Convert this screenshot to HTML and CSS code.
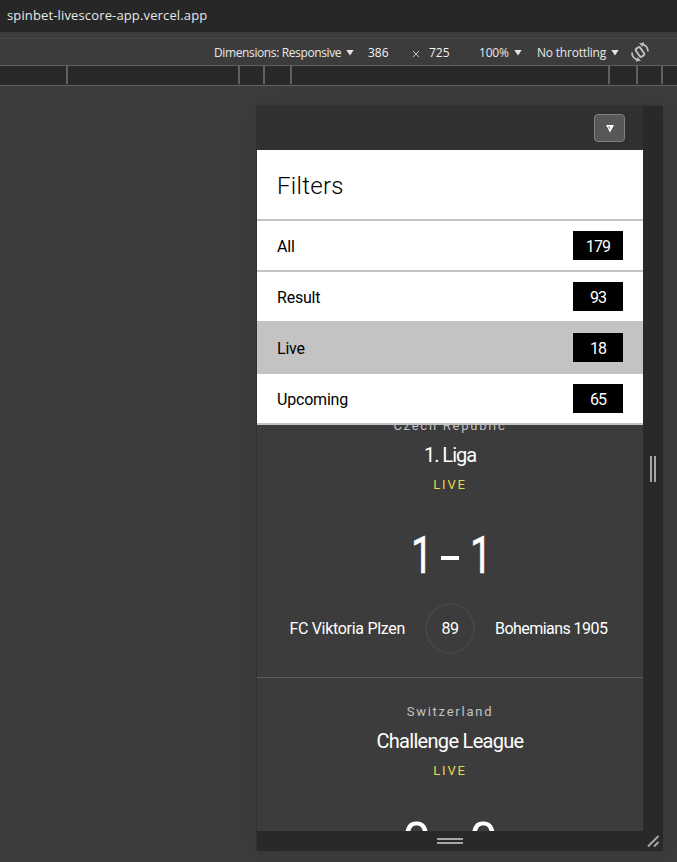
FILE: index.html
```html
<!DOCTYPE html>
<html lang="en">
<head>
<meta charset="utf-8">
<title>spinbet-livescore-app.vercel.app</title>
<link rel="stylesheet" href="styles.css">
</head>
<body>
<header class="address"><span class="url">spinbet-livescore-app.vercel.app</span></header>
<div class="toolbar">
  <span class="dims">Dimensions: Responsive</span><i class="caret"></i>
  <span class="num width">386</span>
  <svg class="times" viewBox="0 0 8 8"><path d="M1 1l6 6M7 1L1 7"/></svg>
  <span class="num height">725</span>
  <span class="zoom">100%</span><i class="caret"></i>
  <span class="throttle">No throttling</span><i class="caret"></i>
  <svg class="rotate" viewBox="0 0 20 20"><rect x="7.4" y="5.2" width="5.2" height="9.6" rx="1.6" transform="rotate(-35 10 10)" /><path d="M11 2.2C15.3 2.4 18 5.4 18 9.6M9 17.8C4.7 17.6 2 14.6 2 10.4"/><path class="tip" d="M9 1.6l5.2-1.4-1.4 4.6zM11 18.4l-5.2 1.4 1.4-4.6z"/></svg>
</div>
<div class="ruler"><i></i><i></i><i></i><i></i><i></i><i></i><i></i></div>
<main class="device">
  <section class="screen">
    <div class="topbar"><button class="menu" aria-label="Filters"><svg viewBox="0 0 8 8"><path class="solid" d="M0 0h8L4 7.5z"/><path class="cut" d="M2.2 1.5l1.6 3V1.5z"/></svg></button></div>
    <h1 class="title">Filters</h1>
    <ul class="filters">
      <li><span>All</span><b>179</b></li>
      <li><span>Result</span><b>93</b></li>
      <li class="active"><span>Live</span><b>18</b></li>
      <li><span>Upcoming</span><b>65</b></li>
    </ul>
    <div class="matches">
      <article class="match">
        <div class="country">Czech Republic</div>
        <h2 class="league short">1. Liga</h2>
        <div class="status">LIVE</div>
        <div class="score ones"><span>1</span><i></i><span>1</span></div>
        <div class="teams"><span class="home">FC Viktoria Plzen</span><span class="minute">89</span><span class="away">Bohemians 1905</span></div>
      </article>
      <article class="match">
        <div class="country">Switzerland</div>
        <h2 class="league">Challenge League</h2>
        <div class="status">LIVE</div>
        <div class="score"><span>0</span><i></i><span>0</span></div>
      </article>
    </div>
  </section>
  <div class="grip-right"><i></i><i></i></div>
  <div class="grip-bottom"><i></i><i></i></div>
  <svg class="grip-corner" viewBox="0 0 20 20"><path d="M5 15.5L15.5 5M11 15.5l4.5-4.5"/></svg>
</main>
</body>
</html>
```
FILE: styles.css
```css
* { box-sizing: border-box; }
body {
  margin: 0; width: 677px; height: 862px; overflow: hidden;
  background: #3c3c3c; color: #e8e8e8;
  font-family: "Open Sans", sans-serif; white-space: nowrap;
}
h1, h2, ul { margin: 0; padding: 0; font-weight: 400; }
.address { height: 32px; padding-left: 7px; background: #272727; font-size: 13px; line-height: 31px; }
.url { letter-spacing: .14px; }
.toolbar {
  height: 34px; padding: 7px 0 0 214px;
  display: flex; align-items: center;
  border-bottom: 1px solid #606163; font-size: 12px;
  background: linear-gradient(#484848, #484848) 0 6px / 100% 1px no-repeat;
}
.toolbar span { flex: none; padding-top: 1px; }
.dims { width: 132px; letter-spacing: -0.38px; }
.caret { flex: none; width: 8px; height: 6px; margin-top: 1px; background: #e4e4e4; clip-path: polygon(0 0, 100% 0, 50% 100%); }
.num { color: #f2f2f2; }
.width { width: 44px; margin-left: 14px; }
.times { width: 8px; height: 8px; margin-top: 4px; stroke: #bdbdbd; fill: none; flex: none; }
.height { width: 50px; margin-left: 9px; }
.zoom { width: 35px; letter-spacing: -0.2px; }
.throttle { width: 74px; margin-left: 15px; letter-spacing: -0.2px; }
.rotate { width: 20px; height: 20px; margin: -1px 0 0 11px; fill: none; stroke: #bdbdbd; stroke-width: 1.9; flex: none; }
.rotate .tip { fill: #bdbdbd; stroke: none; }
.ruler { height: 20px; background: #28292b; border-bottom: 1px solid #606163; display: flex; padding-left: 66px; }
.ruler i { width: 2px; height: 18px; background: #606163; margin-right: 170px; }
.ruler i:nth-child(2) { margin-right: 23px; }
.ruler i:nth-child(3) { margin-right: 25px; }
.ruler i:nth-child(4) { margin-right: 316px; }
.ruler i:nth-child(5) { margin-right: 26px; }
.ruler i:nth-child(6) { margin-right: 23px; }
.ruler i:nth-child(7) { margin-right: 0; }
.device {
  margin: 20px 0 0 257px; width: 406px; height: 745px;
  display: grid; grid-template: 725px 20px / 386px 20px;
  background: #28292b; box-shadow: -1px -1px 0 #323232, 0 0 20px rgba(0, 0, 0, .09);
}
.screen {
  height: 725px; overflow: hidden; background: #3c3c3c;
  display: flex; flex-direction: column; font-family: Roboto, sans-serif;
}
.topbar { flex: 0 0 44px; background: #303030; display: flex; justify-content: flex-end; padding: 8px 18px; }
.menu { width: 31px; height: 28px; padding: 1px 0 0; border: 1px solid #818181; border-radius: 4px; background: #575757; display: grid; place-items: center; }
.menu svg { width: 8px; height: 8px; }
.solid { fill: #fff; }
.cut { fill: #4a6672; }
.title { flex: 0 0 71px; padding: 4px 0 0 20px; line-height: 65px; background: #fff; color: #000; border-bottom: 2px solid #c3c3c3; font-size: 24px; font-weight: 300; letter-spacing: .3px; }
.filters { list-style: none; flex: 0 0 204px; background: #fff; color: #000; font-size: 16px; }
.filters li { height: 51px; padding: 0 20px; border-bottom: 2px solid #c3c3c3; display: flex; align-items: center; justify-content: space-between; }
.filters .active { background: #c3c3c3; }
.filters b { width: 50px; height: 29px; background: #000; color: #fff; font-weight: 400; line-height: 31px; text-align: center; letter-spacing: -.9px; }
.filters span { padding-top: 2px; letter-spacing: -.2px; }
.matches { flex: 1; min-height: 0; overflow: hidden; }
.match { height: 286px; padding-top: 22px; border-bottom: 1px solid #5c5c5c; text-align: center; color: #fff; }
.match:first-child { margin-top: -33px; }
.country { height: 23px; line-height: 23px; font-size: 13px; letter-spacing: 1.75px; color: #c3c3c3; }
.league { height: 37px; line-height: 37px; font-size: 20px; letter-spacing: -.7px; }
.short { letter-spacing: -1px; }
.status { height: 21px; line-height: 21px; font-size: 13px; letter-spacing: 1.8px; color: #e6d94c; }
.score { height: 76px; margin-top: 23px; display: flex; align-items: center; justify-content: center; gap: 10px; font-size: 51px; line-height: 76px; }
.score i { width: 18px; height: 4px; background: #fff; margin-top: 4px; }
.ones span { -webkit-text-stroke: .5px #fff; transform: translateX(5.5px) scaleX(.76); }
.ones span:last-child { transform: translateX(-2.5px) scaleX(.76); }
.teams { height: 50px; margin-top: 9px; display: grid; grid-template-columns: 1fr 50px 1fr; gap: 20px; font-size: 16px; line-height: 51px; }
.home { text-align: right; letter-spacing: -.3px; }
.away { text-align: left; letter-spacing: -.55px; }
.minute { border: 2px solid #454545; border-radius: 50%; line-height: 47px; letter-spacing: -.6px; }
.grip-right { display: flex; align-items: center; justify-content: center; gap: 2px; }
.grip-right i { width: 2px; height: 26px; background: #a5a6a7; }
.grip-bottom { display: flex; flex-direction: column; align-items: center; justify-content: center; gap: 2px; }
.grip-bottom i { width: 26px; height: 2px; background: #a5a6a7; }
.grip-corner { width: 20px; height: 20px; fill: none; stroke: #a5a6a7; stroke-width: 2; }
```
